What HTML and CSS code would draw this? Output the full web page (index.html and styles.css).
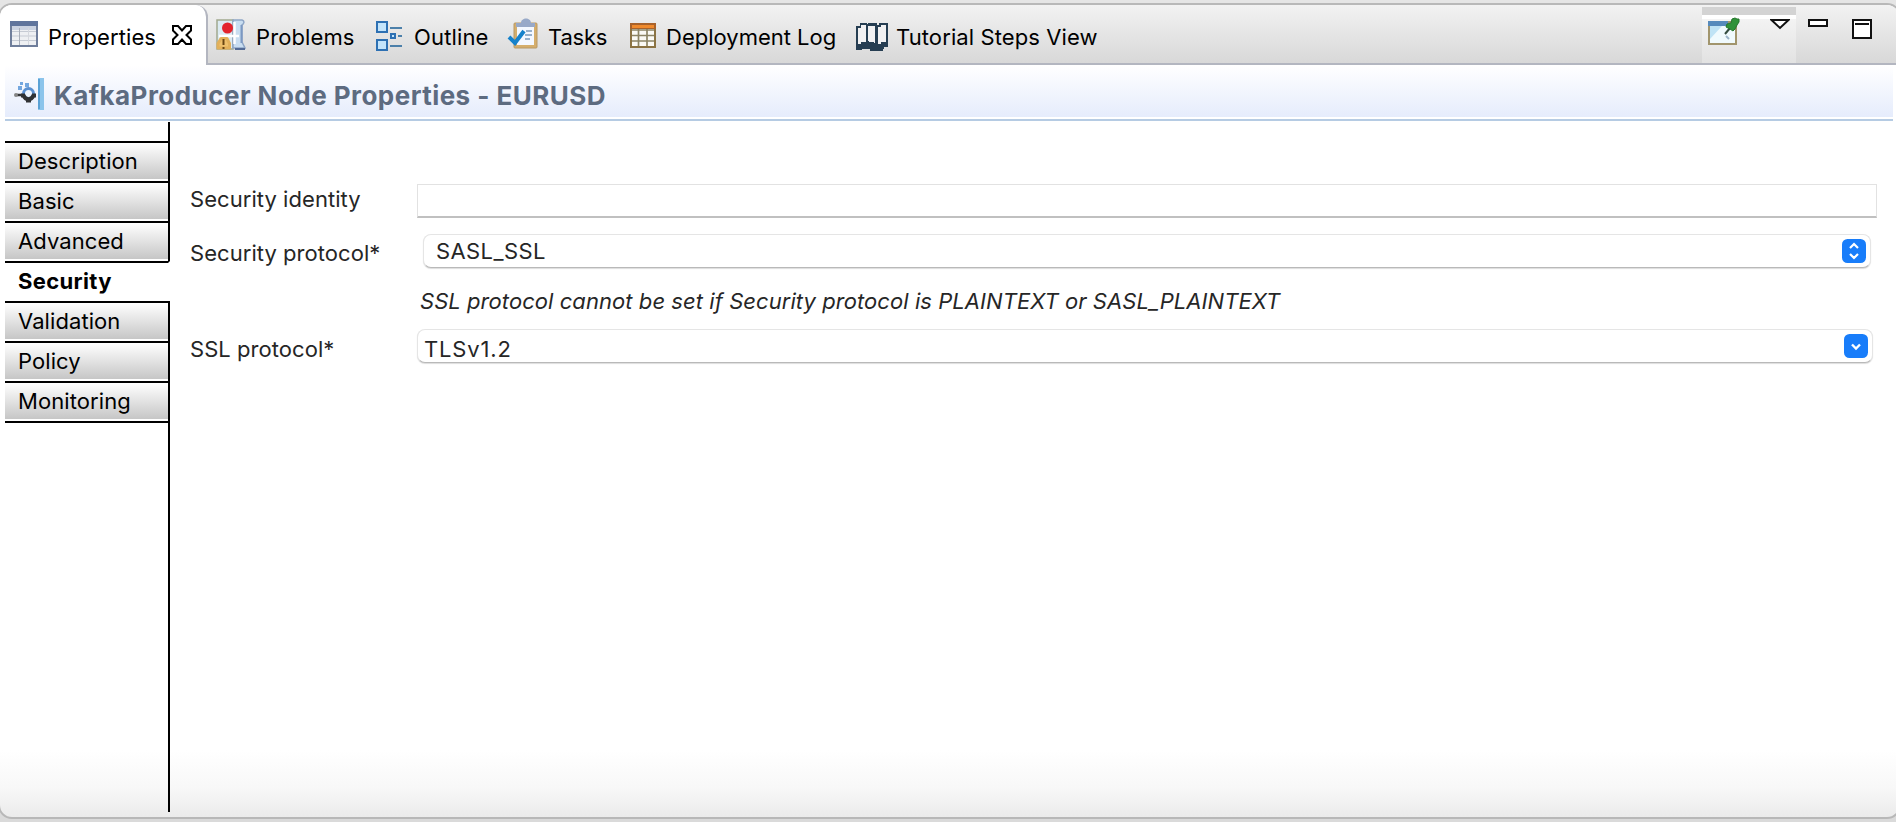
FILE: index.html
```html
<!DOCTYPE html>
<html lang="en">
<head>
<meta charset="utf-8">
<title>Properties</title>
<link rel="stylesheet" href="styles.css">
</head>
<body>
<main class="panel">
  <nav class="tabs">
    <div class="tab tab-active">
      <svg class="icon" width="28" height="26" viewBox="0 0 28 26"><rect x="1" y="1" width="26" height="24" fill="#eef0f3" stroke="#6f7e9b" stroke-width="2"/><path d="M0 0h28v5H0z" fill="#60759d"/><path d="M2 5h24v4H2z" fill="#cbd3e2"/><path d="M2 10.500h24M2 15h24M2 19.500h24" stroke="#c6cbd4"/><path d="M9.500 7v17" stroke="#a9afba"/><path d="M18.500 7v17" stroke="#d5d8de"/></svg>
      <span class="t-properties">Properties</span>
      <svg class="close" width="22" height="22" viewBox="0 0 22 22"><path d="M2 2h5l4 4.500L15 2h5v4.500L15.500 11l4.500 4.500V20h-5l-4-4.500L7 20H2v-4.500L6.500 11 2 6.500z" fill="#fff" stroke="#000" stroke-width="2"/></svg>
    </div>
    <div class="tab tab-problems">
      <svg class="icon" width="30" height="32" viewBox="0 0 30 32"><path d="M1 1h16v29H1z" fill="#dcebf3" stroke="#a1a98f" stroke-width="1.500"/><path d="M17 1h9c3 1 2 4 0 5v17l3 6H17z" fill="#c9def1" stroke="#8fa6c6" stroke-width="1.500"/><path d="M18.500 3v22M3 17h20" stroke="#fff" stroke-width="2.500"/><path d="M25.500 6v18" stroke="#7c98c2" stroke-width="2"/><path d="M19 30h10" stroke="#536b95" stroke-width="2"/><circle cx="11.500" cy="9" r="5.500" fill="#e3232d"/><path d="M5 19.500h6l2.500 5V29H2v-4.500z" fill="#eec06c" stroke="#e2b05a" stroke-width="3" stroke-linejoin="round"/><path d="M7.500 20v6M7.500 28v2" stroke="#6a4714" stroke-width="2"/></svg>
      <span class="t-problems">Problems</span>
    </div>
    <div class="tab tab-outline">
      <svg class="icon" width="28" height="30" viewBox="0 0 28 30"><g fill="#c3e4fb" stroke="#2d70b3" stroke-width="2"><path d="M2 1h10v10H2zM2 19h10v10H2z"/><path d="M16 13h4v4h-4z"/></g><path d="M15 7h12M23 15h4M15 25h12" stroke="#4c80aa" stroke-width="2"/></svg>
      <span class="t-outline">Outline</span>
    </div>
    <div class="tab tab-tasks">
      <svg class="icon" width="32" height="32" viewBox="0 0 32 32"><rect x="7" y="5" width="23" height="25" rx="1" fill="#d5ae6c" stroke="#b89864"/><path d="M10 8h17v19H10z" fill="#f4f8ff"/><path d="M9 9V5h5c0-6 10-6 10 0h4v4z" fill="#98a9c8"/><path d="M19 13h6M18 17h7M18 21h5" stroke="#7999bc" stroke-width="1.500"/><path d="m2 19 6 6 9-12" fill="none" stroke="#1682cb" stroke-width="4"/></svg>
      <span class="t-tasks">Tasks</span>
    </div>
    <div class="tab tab-log">
      <svg class="icon" width="26" height="25" viewBox="0 0 26 25"><path d="M1 1h24v23H1z" fill="#fbfaf5" stroke="#8b7343" stroke-width="2"/><path d="M0 0h26v6H0z" fill="#a9622a"/><path d="M2 2h22v3H2z" fill="#f08a2c"/><path d="M2 7h22M2 12.500h22M2 18h22M8.500 6v17M17 6v17" stroke="#8c8465" stroke-width="1.700"/></svg>
      <span class="t-log">Deployment Log</span>
    </div>
    <div class="tab tab-tutorial">
      <svg class="icon" width="32" height="28" viewBox="0 0 32 28"><path d="M0 3h4V0h7v1h1V0h9v2h2V0h9v24h-4v2h-1v2H14v-2H6v1H0z" fill="#263e52"/><path d="M2 5h3V2h5v17H5v2H2zM12 3h7v17h-1v-1h-5v-1h-1zM22 4h3V2h5v17h-5v2h-3z" fill="#f1f1f2"/></svg>
      <span class="t-tutorial">Tutorial Steps View</span>
    </div>
    <div class="tools">
      <div class="toolbar">
        <svg width="34" height="30" viewBox="0 0 34 30"><path d="M1 5h27v22H1z" fill="#f0fafd" stroke="#a1956d" stroke-width="2"/><path d="M2 9h12L2 22z" fill="#bfe3f5"/><path d="M0 4h20v5H0z" fill="#568abc"/><path d="m17 17 5-6" stroke="#344d40" stroke-width="2"/><path d="m18 19 3 3" stroke="#9bb4c8" stroke-width="2"/><path d="m19 7 4-1 1-4 3-1 2 1h2v3l-2 3-2 4-2 2-3-2-4-2z" fill="#309238" stroke="#24772c"/></svg>
        <svg class="menu" width="20" height="11" viewBox="0 0 20 11"><path d="M1.500 1h17L10 9z" fill="#fff" stroke="#111" stroke-width="2"/></svg>
      </div>
      <svg class="minimize" width="20" height="8" viewBox="0 0 20 8"><path d="M1 1h18v6H1z" fill="#fff" stroke="#111" stroke-width="2"/></svg>
      <svg class="maximize" width="20" height="20" viewBox="0 0 20 20"><path d="M1 1h18v18H1zM3 5h14" fill="#fff" stroke="#111" stroke-width="2"/></svg>
    </div>
  </nav>
  <header class="heading">
    <svg width="31" height="32" viewBox="0 0 31 32"><path d="M24 0h6v32h-6z" fill="#8bc4eb"/><path d="M25 1v30" stroke="#5ba2d5" stroke-width="2"/><circle cx="14.500" cy="15.500" r="5" fill="#eef5fe" stroke="#5a90d0" stroke-width="3"/><path d="M7 17.500h2.500c2 5 8 5 10 0H22" fill="none" stroke="#303234" stroke-width="4"/><path d="M12 23h5" stroke="#303234" stroke-width="3"/><path d="M3 17h5" stroke="#343638" stroke-width="2.500"/><circle cx="2" cy="17" r="2" fill="#858585"/><path d="M4 8h4v4H4zM6 4h3v3H6zM11 5h4v4h-4z" fill="#73a7df"/></svg>
    <h1>KafkaProducer Node Properties - EURUSD</h1>
  </header>
  <div class="content">
    <aside class="sidebar">
      <div class="side-space"></div>
      <a class="side">Description</a>
      <a class="side">Basic</a>
      <a class="side">Advanced</a>
      <a class="side side-active">Security</a>
      <a class="side">Validation</a>
      <a class="side">Policy</a>
      <a class="side">Monitoring</a>
      <div class="side-fill"></div>
    </aside>
    <section class="form">
      <div class="row row-identity"><span class="label">Security identity</span><div class="input"></div></div>
      <div class="row row-security"><span class="label">Security protocol*</span><div class="select"><span>SASL_SSL</span><svg width="24" height="24" viewBox="0 0 24 24"><rect width="24" height="24" rx="5.500" fill="#187dfa"/><path d="m8 9 4-4 4 4m-8 6 4 4 4-4" fill="none" stroke="#fff" stroke-width="2.200"/></svg></div></div>
      <p class="note">SSL protocol cannot be set if Security protocol is PLAINTEXT or SASL_PLAINTEXT</p>
      <div class="row row-ssl"><span class="label">SSL protocol*</span><div class="select combo"><span>TLSv1.2</span><svg width="24" height="24" viewBox="0 0 24 24"><rect width="24" height="24" rx="5.500" fill="#187dfa"/><path d="m8 10.500 4 4 4-4" fill="none" stroke="#fff" stroke-width="2.400"/></svg></div></div>
    </section>
  </div>
</main>
</body>
</html>
```
FILE: styles.css
```css
* { box-sizing: border-box; }
body {
  margin: 0;
  height: 822px;
  padding-top: 3px;
  overflow: hidden;
  background: linear-gradient(#e5e5e5, #dadada);
  font: 22px/36px Inter, "Liberation Sans", sans-serif;
  color: #262626;
}
svg { display: block; flex: none; }
.panel {
  margin: 0 -5px 0 -2px;
  height: 816px;
  border: 2px solid #b8b8b8;
  border-radius: 14px;
  overflow: hidden;
  display: flex;
  flex-direction: column;
  background: linear-gradient(#fff 0, #fff 745px, #f8f8f8 782px, #ebebeb 812px);
}
.tabs {
  height: 60px;
  flex: none;
  display: flex;
  background: linear-gradient(#f2f2f2, #d8d8d8);
  border-bottom: 2px solid #b3b6c0;
  color: #000;
  white-space: nowrap;
}
.tab { display: flex; align-items: flex-start; }
.tab span { margin-top: 14px; }
.tab-active {
  width: 208px;
  height: 60px;
  padding-left: 10px;
  background: #fff;
  border-right: 2px solid #b3b6c0;
  border-radius: 0 12px 0 0;
}
.tab-active .icon { margin: 16px 10px 0 0; }
.close { margin: 19px 0 0 15px; }
.t-properties { width: 108px; letter-spacing: .1px; }
.tab-problems { width: 168px; padding-left: 8px; }
.tab-problems .icon { margin: 14px 10px 0 0; }
.t-problems { letter-spacing: .1px; }
.tab-outline { width: 131px; }
.tab-outline .icon { margin: 16px 11px 0 -1px; }
.t-outline { letter-spacing: .15px; }
.tab-tasks { width: 122px; }
.tab-tasks .icon { margin: 13px 9px 0 0; }
.tab-tasks span { letter-spacing: -.2px; }
.tab-log { width: 226px; }
.tab-log .icon { margin: 18px 10px 0 1px; }
.tab-tutorial .icon { margin: 18px 8px 0 1px; }
.t-tutorial { letter-spacing: .1px; }
.tools { margin-left: auto; width: 197px; display: flex; }
.toolbar {
  width: 94px;
  height: 56px;
  margin-top: 2px;
  padding: 2px 0 0 6px;
  border-top: 8px solid #d3d3d3;
  background: linear-gradient(#fff 0 4px, #f3f3f3 4px, #e2e2e2);
  display: flex;
}
.menu { margin: 2px 0 0 28px; }
.minimize { margin: 14px 0 0 12px; }
.maximize { margin: 14px 0 0 24px; }
.heading {
  height: 56px;
  flex: none;
  margin: 0 6px 0 5px;
  padding: 0 0 4px 9px;
  display: flex;
  align-items: center;
  border-bottom: 2px solid #b5cbe3;
  background: linear-gradient(#fff, #e5ecfc 52px, #fff 52px);
}
.heading svg { margin-top: 8px; }
h1 { margin: 12px 0 0 9px; font-size: 26px; font-weight: 700; letter-spacing: .46px; color: #5d6b80; white-space: nowrap; }
.content { flex: 1; display: flex; padding: 1px 0 5px 5px; }
.sidebar { width: 165px; display: flex; flex-direction: column; color: #000; }
.side-space { height: 19px; border-right: 2px solid #000; }
.side {
  height: 40px;
  padding-left: 13px;
  border-top: 2px solid #000;
  border-right: 2px solid #000;
  background: linear-gradient(#fff, #c6c6c6 36px, #fff 36px);
  letter-spacing: .08px;
}
.side-active { border-right-color: transparent; background: #fff; font-weight: 700; letter-spacing: .35px; }
.side-fill { flex: 1; border-top: 2px solid #000; border-right: 2px solid #000; }
.form { flex: 1; padding: 62px 0 0 20px; }
.row { display: flex; height: 34px; }
.label { width: 227px; flex: none; margin-top: -3px; letter-spacing: .05px; }
.input { width: 1460px; border: 1px solid #e2e2e2; border-bottom: 2px solid #c0c0c0; background: #fff; }
.row-security { margin-top: 16px; }
.row-security .label { margin-top: 1px; }
.row-ssl .label { margin-top: 2px; }
.select {
  width: 1448px;
  margin-left: 6px;
  padding: 0 4px 0 12px;
  display: flex;
  align-items: center;
  justify-content: space-between;
  border: 1px solid #e5e5e5;
  border-bottom: 1px solid #b9b9b9;
  border-radius: 8px;
  box-shadow: 0 1px 1px #ddd;
  background: #fff;
  letter-spacing: .4px;
}
.note { margin: 15px 0 0 230px; font-style: italic; letter-spacing: .06px; white-space: nowrap; }
.row-ssl { margin-top: 10px; }
.combo { width: 1456px; margin-left: 0; padding: 0 4px 0 6px; letter-spacing: .85px; }
.combo span { padding-top: 6px; }
```
